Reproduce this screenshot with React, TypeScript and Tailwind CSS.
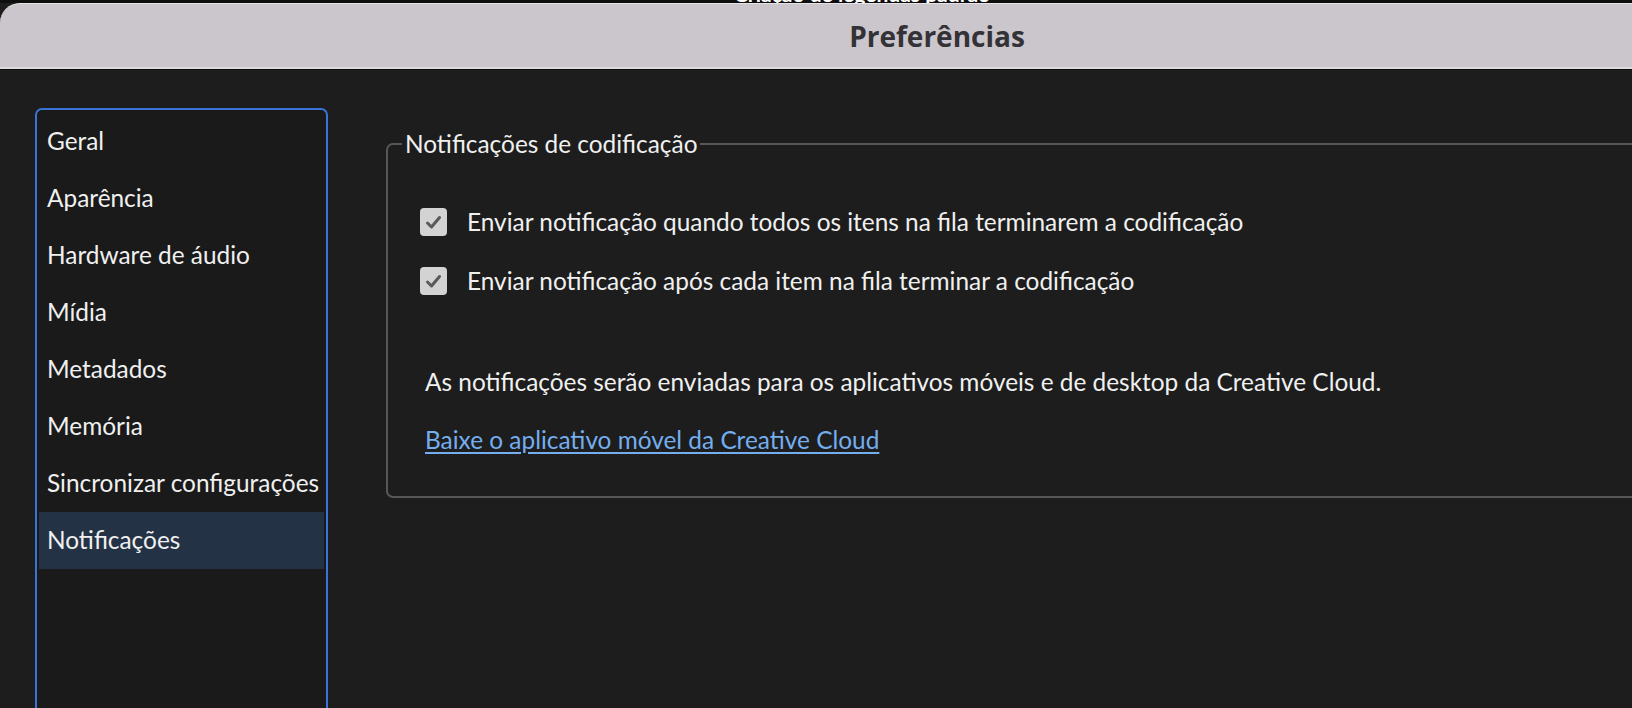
import React from 'react'

const font = { fontFamily: 'Lato, "Open Sans", sans-serif' }

const menu = [
  'Geral',
  'Aparência',
  'Hardware de áudio',
  'Mídia',
  'Metadados',
  'Memória',
  'Sincronizar configurações',
  'Notificações',
]

const Check = () => (
  <span className="flex h-[28px] w-[27px] shrink-0 items-center justify-center rounded-[4px] bg-[#d3d3d3]">
    <svg width="17" height="15" viewBox="0 0 17 15" fill="none">
      <path d="M2.5 8 L6.5 12 L14.5 2.5" stroke="#5a5a5a" strokeWidth="3" strokeLinecap="round" strokeLinejoin="round" />
    </svg>
  </span>
)

const App = () => {
  return (
    <div className="h-[708px] w-full overflow-hidden bg-[#1d1d1d] text-[#f0f0f0]" style={font}>
      {/* window behind, only its bottom edge shows */}
      <div className="h-[3px] overflow-hidden bg-[#0e0e0e]">
        <p className="-mt-[16px] pl-[734px] text-[21px] leading-[20px] font-bold text-white">Criação de legendas padrão</p>
      </div>

      <div className="flex h-[66px] items-center justify-center rounded-tl-[20px] border-t border-b-2 border-t-[#e6e3e6] border-b-[#dedbde] bg-[#cbc6cb] pl-[242px]">
        <h1 className="text-[28px] font-bold text-[#333236]" style={{ fontFamily: '"Open Sans", sans-serif' }}>Preferências</h1>
      </div>
      <div className="h-[1px] bg-[#0f0f0f]" />

      <div className="flex">
        <nav className="mt-[38px] ml-[35px] h-[640px] w-[293px] shrink-0 rounded-[7px] border-2 border-[#3a74d8] bg-[#1a1a1a] px-[2px] pt-[3px]">
          {menu.map((item) => (
            <div
              key={item}
              className={`flex h-[57px] items-center pl-[8px] text-[24.4px] ${item === 'Notificações' ? 'bg-[#243245]' : ''}`}
            >
              {item}
            </div>
          ))}
        </nav>

        <fieldset className="mt-[59px] ml-[58px] mr-[-40px] h-fit flex-1 rounded-[7px] border-2 border-[#575757] pb-[36px]">
          <legend className="ml-[14px] px-[3px] text-[24.4px] leading-[30px]">Notificações de codificação</legend>

          <div className="pl-[32px]">
            <div className="mt-[43px] flex flex-col gap-[19px]">
              <label className="flex h-[40px] items-center gap-[20px] text-[24.4px]">
                <Check />
                Enviar notificação quando todos os itens na fila terminarem a codificação
              </label>
              <label className="flex h-[40px] items-center gap-[20px] text-[24.4px]">
                <Check />
                Enviar notificação após cada item na fila terminar a codificação
              </label>
            </div>

            <p className="mt-[61px] flex h-[40px] items-center pl-[5px] text-[24.4px]">
              As notificações serão enviadas para os aplicativos móveis e de desktop da Creative Cloud.
            </p>
            <a href="#" className="mt-[18px] ml-[5px] flex h-[40px] w-fit items-center text-[24.4px] text-[#74aeef] underline underline-offset-[3px]">
              Baixe o aplicativo móvel da Creative Cloud
            </a>
          </div>
        </fieldset>
      </div>
    </div>
  )
}

export default App
